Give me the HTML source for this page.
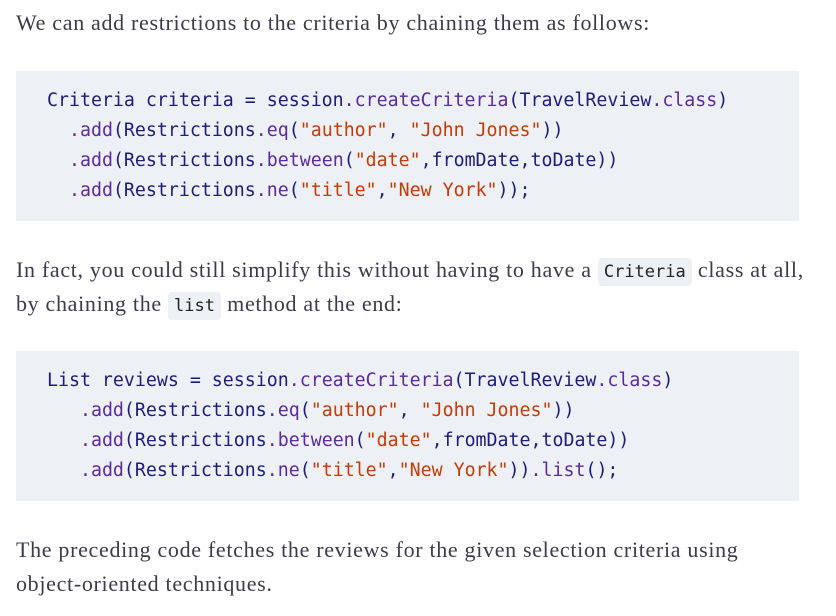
<!DOCTYPE html>
<html><head><meta charset="utf-8"><style>
body{margin:0;width:836px;height:616px;background:#fff;position:relative;overflow:hidden}
.t{position:absolute;left:16px;font-family:"Liberation Serif",serif;font-size:22px;letter-spacing:0.68px;color:#3b3b4c;white-space:nowrap;line-height:34px}
.blk{position:absolute;left:16px;width:783px;height:150px;background:#edf0f5}
.c{position:absolute;font-family:"DejaVu Sans Mono",monospace;font-size:18.25px;white-space:pre;color:#1c1c7e;line-height:30px}
.p{color:#5a2aa0}.s{color:#c73a06}
.ic{font-family:"DejaVu Sans Mono",monospace;font-size:17px;background:#edf0f5;border-radius:4px;padding:4px 6px;color:#222;letter-spacing:0}
</style></head><body>
<div class="t" style="top:6px">We can add restrictions to the criteria by chaining them as follows:</div>
<div class="blk" style="top:71px"></div>
<div class="c" style="left:47px;top:86px">Criteria criteria = session<span class="p">.createCriteria</span>(TravelReview<span class="p">.class</span>)
  <span class="p">.add</span>(Restrictions<span class="p">.eq</span>(<span class="s">"author"</span>, <span class="s">"John Jones"</span>))
  <span class="p">.add</span>(Restrictions<span class="p">.between</span>(<span class="s">"date"</span>,fromDate,toDate))
  <span class="p">.add</span>(Restrictions<span class="p">.ne</span>(<span class="s">"title"</span>,<span class="s">"New York"</span>));</div>
<div class="t" style="top:253px">In fact, you could still simplify this without having to have a <span class="ic">Criteria</span> class at all,</div>
<div class="t" style="top:287px">by chaining the <span class="ic">list</span> method at the end:</div>
<div class="blk" style="top:351px"></div>
<div class="c" style="left:47px;top:366px">List reviews = session<span class="p">.createCriteria</span>(TravelReview<span class="p">.class</span>)
   <span class="p">.add</span>(Restrictions<span class="p">.eq</span>(<span class="s">"author"</span>, <span class="s">"John Jones"</span>))
   <span class="p">.add</span>(Restrictions<span class="p">.between</span>(<span class="s">"date"</span>,fromDate,toDate))
   <span class="p">.add</span>(Restrictions<span class="p">.ne</span>(<span class="s">"title"</span>,<span class="s">"New York"</span>))<span class="p">.list</span>();</div>
<div class="t" style="top:533px">The preceding code fetches the reviews for the given selection criteria using</div>
<div class="t" style="top:567px">object-oriented techniques.</div>
</body></html>
